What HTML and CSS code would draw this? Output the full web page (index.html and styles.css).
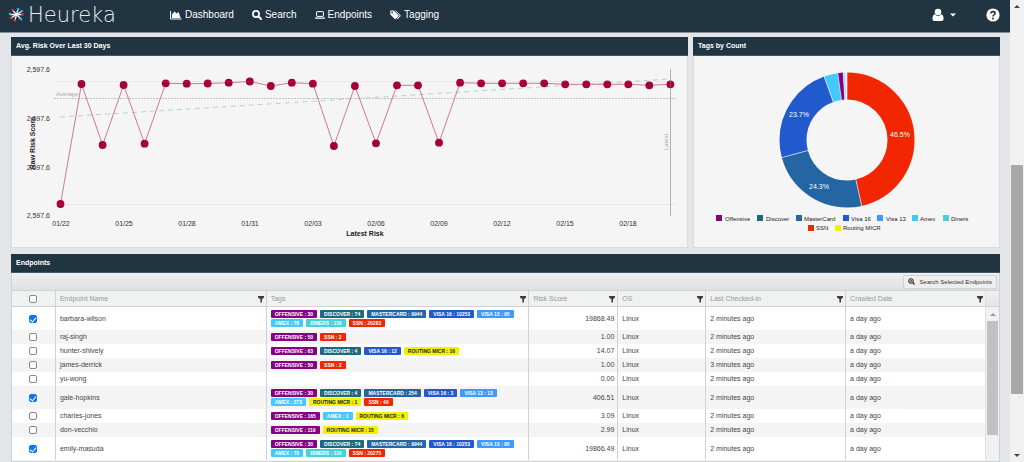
FILE: index.html
```html
<!DOCTYPE html>
<html lang="en">
<head>
<meta charset="utf-8">
<title>Heureka</title>
<link rel="stylesheet" href="styles.css">
</head>
<body>
<svg class="defs" aria-hidden="true">
  <symbol id="filter" viewBox="0 0 8 8"><path d="M1 1h6v1.5L5 4.2V7.4H3.4V4.2L1 2.5z"/></symbol>
</svg>
<div class="app">
  <header class="topbar">
    <a class="brand" href="#">
      <svg class="brand-mark" viewBox="0 0 18 16" aria-hidden="true">
        <g stroke="#e8edf0" stroke-width="1.4" stroke-linecap="round"><path d="M9 7.5L10.5 2M9 7.5L14.5 4M9 7.5H15M9 7.5L13.5 12M9 7.5L7.5 13M9 7.5L3.5 11M9 7.5H2.5M9 7.5L5 3"/></g>
        <g fill="#e0303a"><circle cx="4.8" cy="2.8" r="1.3"/><circle cx="15.3" cy="7.4" r="1.4"/><circle cx="3" cy="11.2" r="1.3"/><circle cx="7.2" cy="13.8" r="1.3"/></g>
        <g fill="#35a8e0"><circle cx="10.8" cy="1.7" r="1.4"/><circle cx="15" cy="3.7" r="1.2"/><circle cx="2" cy="6.8" r="1.3"/><circle cx="13.8" cy="12.4" r="1.4"/></g>
      </svg>
      <span class="brand-name">Heureka</span>
    </a>
    <nav class="nav">
      <a href="#"><svg viewBox="0 0 12 10" width="12" height="10"><path d="M.6 1v8h11" fill="none" stroke="#fff"/><path d="M2 8V4.500l2.500-3 2 2 2-1.500L10.700 8z" fill="#fff"/></svg>Dashboard</a>
      <a href="#"><svg viewBox="0 0 10 10" width="10" height="10" fill="none" stroke="#fff"><circle cx="4" cy="4" r="3.100" stroke-width="1.700"/><path d="M6.300 6.300L9 9" stroke-width="2" stroke-linecap="round"/></svg>Search</a>
      <a href="#"><svg viewBox="0 0 10 8" width="10" height="8"><rect x="1.600" y=".6" width="6.800" height="4.800" rx=".5" fill="none" stroke="#fff"/><path d="M0 6.400h10v.8q0 .5-.8.5H.8Q0 7.700 0 7.200z" fill="#fff"/></svg>Endpoints</a>
      <a href="#"><svg viewBox="0 0 11 10" width="11" height="10" fill="#fff"><path fill-rule="evenodd" d="M.3 1.200Q.3.500 1 .5h2.800L8.500 5.200q.4.500 0 1L5.700 9q-.4.400-.9 0L.3 4.500zM2.100 1.500a.8.800 0 1 0 .01 0z"/><path d="M5 .5h.8l4.700 4.700q.4.500 0 1L7.500 9.200l-.8-.4 2.700-2.600q.4-.5 0-1z"/></svg>Tagging</a>
    </nav>
    <div class="tools">
      <button class="icon-button user" aria-label="Account"><svg viewBox="0 0 12 14" width="12" height="14" fill="#fff"><circle cx="6" cy="4" r="3.300"/><path d="M2.900 6.300Q4 8 6 8t3.100-1.700Q11.600 7 11.600 11q0 2-2 2H2.400q-2 0-2-2Q.4 7 2.900 6.300z"/></svg><svg viewBox="0 0 6 4" width="6" height="4" fill="#fff"><path d="M0 .5h6L3 3.500z"/></svg></button>
      <button class="icon-button" aria-label="Help"><svg viewBox="0 0 14 14" width="14" height="14"><circle cx="7" cy="7" r="6.600" fill="#fff"/><path d="M4.900 5.500Q5 3.600 7 3.600t2.100 1.700Q9.100 6.300 8 6.900q-1 .5-1 1.500" fill="none" stroke="#203442" stroke-width="1.600"/><circle cx="7" cy="10.400" r="1" fill="#203442"/></svg></button>
    </div>
  </header>

  <main class="content">
    <div class="charts">
      <section class="panel">
        <h2>Avg. Risk Over Last 30 Days</h2>
        <svg class="chart" viewBox="12 56 675 191" role="img" aria-label="Average risk over the last 30 days">
          <defs><marker id="dot" markerUnits="userSpaceOnUse" markerWidth="10" markerHeight="10" refX="5" refY="5"><circle cx="5" cy="5" r="3.900" fill="#a50034"/></marker></defs>
          <g class="axis-text" text-anchor="end"><text x="50" y="72">2,597.6</text><text x="50" y="121">2,597.6</text><text x="50" y="170">2,597.6</text><text x="50" y="218">2,597.6</text></g>
          <g class="axis-text" text-anchor="middle"><text x="61" y="226">01/22</text><text x="124" y="226">01/25</text><text x="187" y="226">01/28</text><text x="250" y="226">01/31</text><text x="313" y="226">02/03</text><text x="376" y="226">02/06</text><text x="439" y="226">02/09</text><text x="502" y="226">02/12</text><text x="565" y="226">02/15</text><text x="628" y="226">02/18</text></g>
          <text class="axis-title" text-anchor="middle" x="365" y="236">Latest Risk</text>
          <text class="axis-title" text-anchor="middle" transform="translate(35 143) rotate(-90)">Raw Risk Score</text>
          <text class="note" x="56" y="96">Average</text>
          <text class="note" text-anchor="middle" transform="translate(668 142) rotate(-90)">Latest</text>
          <path d="M54 98.500H676" stroke="#c2c2c2" stroke-dasharray="2 1"/>
          <path d="M60 117L670 79" stroke="#b4d3da" stroke-dasharray="5 4"/>
          <polyline class="risk" points="60.500,204 81.500,84 102.600,145 123.600,85 144.600,143.700 165.700,83.300 186.700,83.700 207.700,83.500 228.700,82.700 249.800,81.500 270.800,86 291.800,82.700 312.900,83.700 333.900,146 354.900,86 376,143.300 397,85.300 418,85.300 439,142.700 460.100,82.700 481.100,83.300 502.100,83.300 523.200,83.300 544.200,83.300 565.200,84.300 586.300,84.300 607.300,84.300 628.300,84.300 649.300,85.300 670.400,84.300"/>
          <path d="M54 81.500H676M54 204.500H676" stroke="#999" stroke-opacity=".13"/>
          <path d="M670.500 69V216" stroke="#777" stroke-opacity=".55"/>
        </svg>
      </section>
      <section class="panel">
        <h2>Tags by Count</h2>
        <svg class="chart" viewBox="694 56 305 191" role="img" aria-label="Tags by count">
          <g fill="none" stroke-width="27" transform="rotate(-90 847 140)">
            <circle cx="847" cy="140" r="54" pathLength="100" stroke="#f22600" stroke-dasharray="46.500 53.500"/>
            <circle cx="847" cy="140" r="54" pathLength="100" stroke="#2465a3" stroke-dasharray="24.300 75.700" stroke-dashoffset="-46.500"/>
            <circle cx="847" cy="140" r="54" pathLength="100" stroke="#2159cf" stroke-dasharray="23.700 76.300" stroke-dashoffset="-70.800"/>
            <circle cx="847" cy="140" r="54" pathLength="100" stroke="#45c8fd" stroke-dasharray="3.300 96.700" stroke-dashoffset="-94.500"/>
            <circle cx="847" cy="140" r="54" pathLength="100" stroke="#840084" stroke-dasharray="1.300 98.700" stroke-dashoffset="-97.800"/>
            <circle cx="847" cy="140" r="54" pathLength="100" stroke="#a9dcfb" stroke-dasharray=".5 99.500" stroke-dashoffset="-99.100"/>
          </g>
          <g stroke="#f5f5f5" stroke-width=".6">
            <path d="M847 72V100"/>
            <path d="M847 72V100" transform="rotate(167.400 847 140)"/>
            <path d="M847 72V100" transform="rotate(254.900 847 140)"/>
            <path d="M847 72V100" transform="rotate(340.200 847 140)"/>
            <path d="M847 72V100" transform="rotate(352.100 847 140)"/>
            <path d="M847 72V100" transform="rotate(356.800 847 140)"/>
          </g>
          <g class="slice-text" text-anchor="middle"><text x="900" y="137">46.5%</text><text x="819" y="189">24.3%</text><text x="799" y="117">23.7%</text></g>
          <g class="legend">
            <rect x="716" y="215" width="6" height="6" fill="#840084"/><text x="725" y="221">Offensive</text>
            <rect x="757" y="215" width="6" height="6" fill="#1c6a80"/><text x="766" y="221">Discover</text>
            <rect x="796" y="215" width="6" height="6" fill="#2465a3"/><text x="804" y="221">MasterCard</text>
            <rect x="843" y="215" width="6" height="6" fill="#2159cf"/><text x="851" y="221">Visa 16</text>
            <rect x="877" y="215" width="6" height="6" fill="#3d9bff"/><text x="886" y="221">Visa 13</text>
            <rect x="912" y="215" width="6" height="6" fill="#45c8fd"/><text x="920" y="221">Amex</text>
            <rect x="943" y="215" width="6" height="6" fill="#43d3dd"/><text x="951" y="221">Diners</text>
            <rect x="808" y="225" width="6" height="6" fill="#f22600"/><text x="816" y="230">SSN</text>
            <rect x="835" y="225" width="6" height="6" fill="#f2f200"/><text x="843" y="230">Routing MICR</text>
          </g>
        </svg>
      </section>
    </div>

    <section class="panel endpoints">
      <h2>Endpoints</h2>
      <div class="toolbar">
        <button class="search-selected"><svg viewBox="0 0 8 8" width="7" height="7" fill="none" stroke="#333"><circle cx="3.400" cy="3.400" r="2.600" stroke-width="1.200"/><path d="M5.400 5.400L7.500 7.500" stroke-width="1.500"/><path d="M2 3.400h2.800M3.400 2v2.800" stroke-width=".9"/></svg>Search Selected Endpoints</button>
      </div>
      <div class="grid">
        <table>
          <colgroup><col class="c-check"><col class="c-name"><col class="c-tags"><col class="c-risk"><col class="c-os"><col class="c-date"><col class="c-date"></colgroup>
          <thead>
            <tr>
              <th class="check"><input type="checkbox" aria-label="Select all"></th>
              <th><div class="head">Endpoint Name<button aria-label="Filter by name"><svg><use href="#filter"/></svg></button></div></th>
              <th><div class="head">Tags<button aria-label="Filter by tags"><svg><use href="#filter"/></svg></button></div></th>
              <th><div class="head">Risk Score<button aria-label="Filter by risk score"><svg><use href="#filter"/></svg></button></div></th>
              <th><div class="head">OS<button aria-label="Filter by OS"><svg><use href="#filter"/></svg></button></div></th>
              <th><div class="head">Last Checked-in<button aria-label="Filter by last check-in"><svg><use href="#filter"/></svg></button></div></th>
              <th><div class="head">Crawled Date<button aria-label="Filter by crawled date"><svg><use href="#filter"/></svg></button></div></th>
            </tr>
          </thead>
          <tbody>
            <tr><td class="check"><input type="checkbox" checked aria-label="barbara-wilson"></td><td>barbara-wilson</td><td><div class="tags"><span class="tag offensive">OFFENSIVE : 30</span><span class="tag discover">DISCOVER : 74</span><span class="tag mastercard">MASTERCARD : 9944</span><span class="tag visa16">VISA 16 : 10253</span><span class="tag visa13">VISA 13 : 95</span><span class="tag amex">AMEX : 76</span><span class="tag diners">DINERS : 110</span><span class="tag ssn">SSN : 20283</span></div></td><td class="num">19868.49</td><td>Linux</td><td>2 minutes ago</td><td>a day ago</td></tr>
            <tr><td class="check"><input type="checkbox" aria-label="raj-singh"></td><td>raj-singh</td><td><div class="tags"><span class="tag offensive">OFFENSIVE : 50</span><span class="tag ssn">SSN : 2</span></div></td><td class="num">1.00</td><td>Linux</td><td>2 minutes ago</td><td>a day ago</td></tr>
            <tr><td class="check"><input type="checkbox" aria-label="hunter-shively"></td><td>hunter-shively</td><td><div class="tags"><span class="tag offensive">OFFENSIVE : 63</span><span class="tag discover">DISCOVER : 4</span><span class="tag visa16">VISA 16 : 12</span><span class="tag routing">ROUTING MICR : 16</span></div></td><td class="num">14.07</td><td>Linux</td><td>2 minutes ago</td><td>a day ago</td></tr>
            <tr><td class="check"><input type="checkbox" aria-label="james-derrick"></td><td>james-derrick</td><td><div class="tags"><span class="tag offensive">OFFENSIVE : 50</span><span class="tag ssn">SSN : 2</span></div></td><td class="num">1.00</td><td>Linux</td><td>3 minutes ago</td><td>a day ago</td></tr>
            <tr><td class="check"><input type="checkbox" aria-label="yu-wong"></td><td>yu-wong</td><td></td><td class="num">0.00</td><td>Linux</td><td>2 minutes ago</td><td>a day ago</td></tr>
            <tr><td class="check"><input type="checkbox" checked aria-label="gale-hopkins"></td><td>gale-hopkins</td><td><div class="tags"><span class="tag offensive">OFFENSIVE : 30</span><span class="tag discover">DISCOVER : 4</span><span class="tag mastercard">MASTERCARD : 254</span><span class="tag visa16">VISA 16 : 3</span><span class="tag visa13">VISA 13 : 13</span><span class="tag amex">AMEX : 273</span><span class="tag routing">ROUTING MICR : 1</span><span class="tag ssn">SSN : 49</span></div></td><td class="num">406.51</td><td>Linux</td><td>2 minutes ago</td><td>a day ago</td></tr>
            <tr><td class="check"><input type="checkbox" aria-label="charles-jones"></td><td>charles-jones</td><td><div class="tags"><span class="tag offensive">OFFENSIVE : 165</span><span class="tag amex">AMEX : 1</span><span class="tag routing">ROUTING MICR : 6</span></div></td><td class="num">3.09</td><td>Linux</td><td>2 minutes ago</td><td>a day ago</td></tr>
            <tr><td class="check"><input type="checkbox" aria-label="don-vecchio"></td><td>don-vecchio</td><td><div class="tags"><span class="tag offensive">OFFENSIVE : 119</span><span class="tag routing">ROUTING MICR : 15</span></div></td><td class="num">2.99</td><td>Linux</td><td>2 minutes ago</td><td>a day ago</td></tr>
            <tr><td class="check"><input type="checkbox" checked aria-label="emily-masuda"></td><td>emily-masuda</td><td><div class="tags"><span class="tag offensive">OFFENSIVE : 30</span><span class="tag discover">DISCOVER : 74</span><span class="tag mastercard">MASTERCARD : 9944</span><span class="tag visa16">VISA 16 : 10253</span><span class="tag visa13">VISA 13 : 95</span><span class="tag amex">AMEX : 76</span><span class="tag diners">DINERS : 110</span><span class="tag ssn">SSN : 20275</span></div></td><td class="num">19866.49</td><td>Linux</td><td>2 minutes ago</td><td>a day ago</td></tr>
          </tbody>
        </table>
        <div class="grid-side">
          <div class="grid-corner"></div>
          <div class="grid-scroll"><svg viewBox="0 0 6 3" width="6" height="3" fill="#999"><path d="M0 3L3 0l3 3z"/></svg><div class="grid-thumb"></div></div>
        </div>
      </div>
    </section>
  </main>
</div>
<div class="page-scroll" aria-hidden="true">
  <svg viewBox="0 0 6 3" width="6" height="3" fill="#444"><path d="M0 3L3 0l3 3z"/></svg>
  <div class="track"><div class="before"></div><div class="page-thumb"></div><div class="after"></div></div>
  <svg viewBox="0 0 6 3" width="6" height="3" fill="#444"><path d="M0 0h6L3 3z"/></svg>
</div>
</body>
</html>
```

FILE: styles.css
```css
* { box-sizing: border-box; }
body {
  margin: 0;
  display: flex;
  height: 100vh;
  overflow: hidden;
  background: #e3e5e8;
  color: #444;
  font: 7px/8px "Liberation Sans", Arial, sans-serif;
}
button { font: inherit; color: inherit; }
svg { display: block; flex: none; }
.defs { position: absolute; width: 0; height: 0; }
.app { flex: 1; min-width: 0; display: flex; flex-direction: column; }

.topbar {
  display: flex;
  align-items: center;
  height: 33px;
  flex: none;
  padding: 0 10px 2px 8px;
  background: #203442;
  border-bottom: 1px solid #84909a;
}
.brand {
  display: flex;
  align-items: center;
  gap: 3px;
  width: 162px;
  color: #e8edf0;
  text-decoration: none;
}
.brand-mark { width: 17px; height: 16px; }
.brand-name { font: 200 21px/24px "DejaVu Sans Light", "DejaVu Sans", sans-serif; }
.nav { display: flex; gap: 18px; }
.nav a {
  display: flex;
  align-items: center;
  gap: 3px;
  color: #fff;
  font-size: 10px;
  line-height: 12px;
  text-decoration: none;
}
.tools { display: flex; align-items: center; gap: 30px; margin-left: auto; }
.icon-button { display: flex; align-items: center; padding: 0; border: 0; background: none; }
.user { gap: 6px; }

.content {
  flex: 1;
  min-height: 0;
  display: flex;
  flex-direction: column;
  gap: 6px;
  padding: 4px 10px 0 11px;
}
.charts { display: grid; grid-template-columns: 677fr 307fr; gap: 5px; }
.panel { min-width: 0; background: #f5f5f5; }
.panel h2 {
  margin: 0;
  height: 19px;
  padding: 0 5px;
  background: #203442;
  border-bottom: 1px solid #43586a;
  color: #fff;
  font-size: 7px;
  line-height: 18px;
}
.chart {
  width: 100%;
  height: auto;
  border: solid #d9dbde;
  border-width: 0 1px 1px;
}
.axis-text { font-size: 7px; fill: #333; }
.axis-title { font-size: 7px; font-weight: bold; fill: #222; }
.note { font-size: 6px; fill: #aaa; }
.risk {
  fill: none;
  stroke: #cf7893;
  stroke-width: 1;
  marker: url(#dot);
}
.slice-text { font-size: 7px; fill: #fff; }
.legend { font-size: 6px; fill: #222; }

.endpoints { flex: 1; min-height: 0; display: flex; flex-direction: column; }
.toolbar {
  display: flex;
  justify-content: flex-end;
  align-items: center;
  height: 18px;
  flex: none;
  padding: 0 2px;
  background: linear-gradient(#f0f0f0, #e0e0e0);
  border: solid #d0d2d4;
  border-width: 0 1px 1px;
}
.search-selected {
  display: flex;
  align-items: center;
  gap: 5px;
  height: 14px;
  padding: 0 4px;
  background: #eee;
  border: 1px solid #d2d2d2;
  border-radius: 2px;
  color: #333;
  font-size: 6px;
}
.grid {
  flex: 1;
  min-height: 0;
  display: flex;
  align-items: stretch;
  overflow: hidden;
  border: solid #cfd1d3;
  border-width: 0 1px 1px;
}
table {
  flex: 1;
  min-width: 0;
  align-self: flex-start;
  table-layout: fixed;
  border-collapse: separate;
  border-spacing: 0;
}
.c-check { width: 44px; }
.c-name { width: 211px; }
.c-tags { width: 263px; }
.c-risk { width: 89px; }
.c-os { width: 88px; }
.c-date { width: 140px; }
th, td { padding: 0 4px; border-right: 1px solid #d0d2d3; text-align: left; }
th {
  height: 16px;
  background: #f0f2f1;
  border-bottom: 1px solid #d0d2d3;
  color: #999;
  font-weight: normal;
}
td { height: 14px; }
td:last-child, th:last-child { border-right-color: #e0e0e0; }
tbody tr { background: #fff; }
tbody tr:nth-child(even) { background: #f4f4f4; }
.check { text-align: center; }
td.num { padding-right: 3px; text-align: right; }
.head { display: flex; align-items: center; justify-content: space-between; }
.head button { display: block; margin-right: -3px; padding: 0; border: 0; background: none; }
.head svg { width: 8px; height: 8px; fill: #4a3a36; }
input[type="checkbox"] {
  appearance: none;
  display: block;
  width: 8px;
  height: 8px;
  margin: 0 auto;
  border: 1px solid #888;
  border-radius: 2px;
  background: #fff;
}
input[type="checkbox"]:checked { background: #0b76f5; border-color: #0b76f5; }
input[type="checkbox"]:checked::after {
  content: "";
  display: block;
  width: 3px;
  height: 5px;
  margin: 0 auto;
  border: solid #fff;
  border-width: 0 1px 1px 0;
  transform: rotate(40deg);
}
.tags { display: flex; flex-wrap: wrap; gap: 1px 3px; padding: 3px 0; }
.tag {
  padding: 0 4px;
  border-radius: 1px;
  color: #fff;
  font-size: 5px;
  font-weight: bold;
  line-height: 8px;
  white-space: nowrap;
}
.offensive { background: #840084; }
.discover { background: #1c6a80; }
.mastercard { background: #2465a3; }
.visa16 { background: #2159cf; }
.visa13 { background: #3d9bff; }
.amex { background: #45c8fd; }
.diners { background: #43d3dd; }
.ssn { background: #f22600; }
.routing { background: #f2f200; color: #222; }

.grid-side { width: 13px; flex: none; display: flex; flex-direction: column; }
.grid-corner { height: 16px; background: linear-gradient(#f0f0f0, #e4e4e4); border-bottom: 1px solid #d0d2d3; }
.grid-scroll {
  flex: 1;
  display: flex;
  flex-direction: column;
  align-items: center;
  gap: 5px;
  padding: 6px 1px 26px;
  background: #f1f1f1;
}
.grid-thumb { flex: 1; width: 100%; background: #c1c1c1; }

.page-scroll {
  width: 14px;
  flex: none;
  display: flex;
  flex-direction: column;
  align-items: center;
  padding: 5px 1px;
  background: #f1f1f1;
}
.track { flex: 1; width: 100%; display: flex; flex-direction: column; }
.before { flex: 157; }
.page-thumb { flex: 229; background: #a8a8a8; }
.after { flex: 60; }
```
